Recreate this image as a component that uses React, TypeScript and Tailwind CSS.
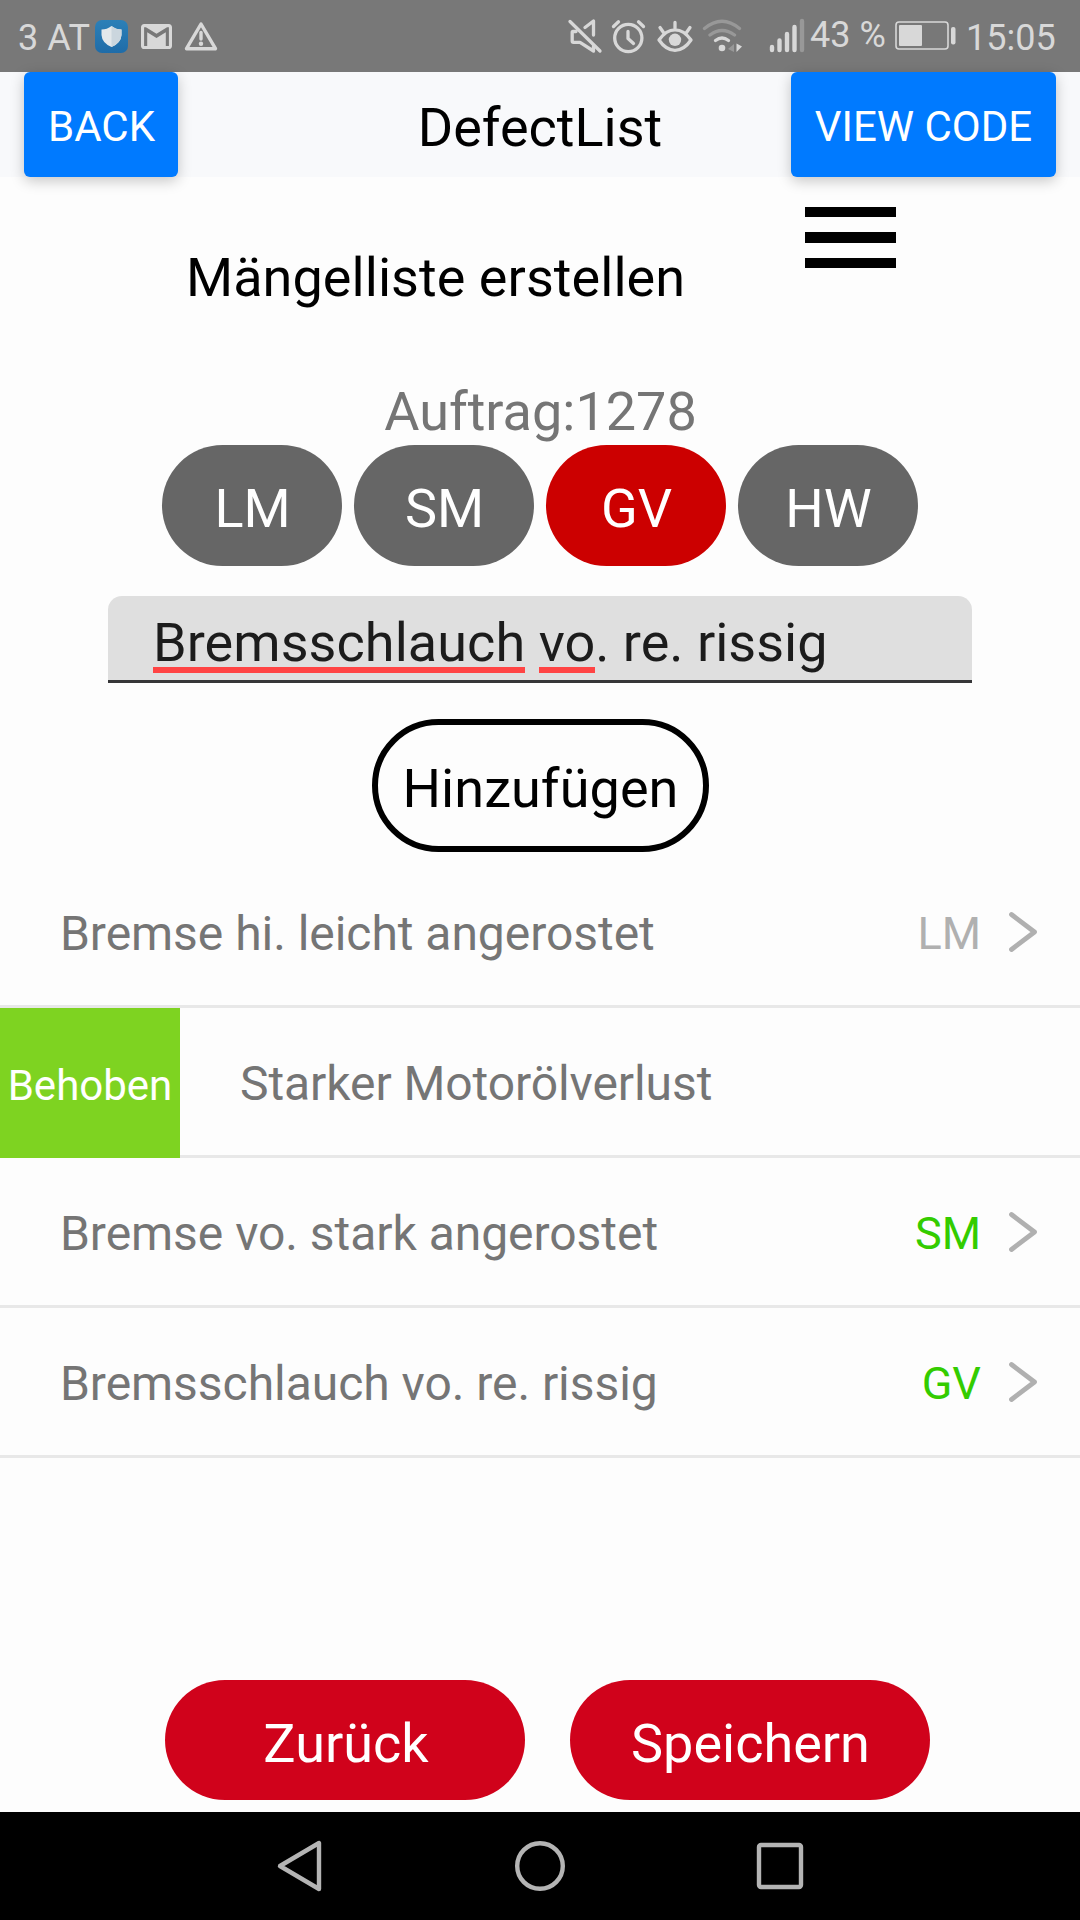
const tabs = [
  { label: "LM", active: false },
  { label: "SM", active: false },
  { label: "GV", active: true },
  { label: "HW", active: false },
];

function StatusBar() {
  return (
    <div className="flex h-[72px] shrink-0 items-center bg-[#787878] text-[36px] leading-[42px] text-[#d8d8d8]">
      <span className="ml-[18px] w-[77px] whitespace-nowrap pt-[3px]">3 AT</span>
      <svg width="33" height="33" viewBox="0 0 33 33" className="shrink-0">
        <defs>
          <linearGradient id="tile" x1="0" y1="0" x2="0" y2="1">
            <stop offset="0" stopColor="#2c80b8" />
            <stop offset="1" stopColor="#1f6ca8" />
          </linearGradient>
        </defs>
        <rect width="33" height="33" rx="7" fill="url(#tile)" />
        <path d="M16.500 6 Q21 9.500 26.500 9.500 V15 Q26 23 16.500 27 Q7 23 6.500 15 V9.500 Q12 9.500 16.500 6 Z" fill="#e3e8eb" />
        <path d="M16.500 6 Q21 9.500 26.500 9.500 V15 Q26 23 16.500 27 Z" fill="#cbd6de" />
      </svg>
      <svg width="31" height="25" viewBox="2 4 20 16" preserveAspectRatio="none" className="ml-[13px] shrink-0">
        <path
          fill="#d8d8d8"
          d="M20 4H4c-1.100 0-2 .9-2 2v12c0 1.100.9 2 2 2h16c1.100 0 2-.9 2-2V6c0-1.100-.9-2-2-2zm0 14h-2V9.250L12 13 6 9.250V18H4V6h1.200l6.800 4.250L18.800 6H20v12z"
        />
      </svg>
      <svg width="34" height="30" viewBox="0 0 34 30" className="-mt-[1px] ml-[12px] shrink-0">
        <path d="M17 3 L31.500 27.700 H2.500 Z" fill="none" stroke="#d8d8d8" strokeWidth="3.400" strokeLinejoin="round" />
        <path d="M17 11.500 V18" stroke="#d8d8d8" strokeWidth="3.400" strokeLinecap="round" />
        <circle cx="17" cy="22.800" r="2.200" fill="#d8d8d8" />
      </svg>
      <svg width="242" height="36" viewBox="568 18 242 36" fill="none" stroke="#d8d8d8" strokeWidth="3.300" strokeLinecap="round" strokeLinejoin="round" className="ml-[349px] shrink-0">
        <path d="M571 21.500 L601 51" />
        <path d="M586 27.500 L594.500 21 V35" />
        <path d="M577 31.500 H574 Q573.200 31.500 573.200 32.500 V41 Q573.200 42.300 574.500 42.300 H581 L594.500 51 V46" />
        <circle cx="629.300" cy="38" r="13.600" />
        <path d="M629 31.500 V38.500 L634.500 43.500" />
        <path d="M614.500 26.500 L619.500 21.800 M644.500 26.500 L639.500 21.800" />
        <path d="M660 40 Q667 29.800 676 29.800 Q685 29.800 692 40 Q685 50.300 676 50.300 Q667 50.300 660 40 Z" />
        <circle cx="676" cy="39.800" r="6.200" fill="#d8d8d8" stroke="none" />
        <path d="M676 22.500 V28 M661 27.500 L664.500 32.500 M691 27.500 L687.500 32.500" />
        <path d="M705.500 28.500 Q723 14 740.500 28.500 M711 35 Q723 26 735.500 35" stroke="#989898" />
        <path d="M716.500 40.500 Q723 35.500 729.500 40.500" />
        <circle cx="723" cy="48" r="3.300" fill="#d8d8d8" stroke="none" />
        <path d="M735 44 V52 L729 49 Z" fill="#989898" stroke="none" />
        <path d="M737.500 43.500 L743 46.500 L737.500 52 Z" fill="#d8d8d8" stroke="none" />
        <path d="M773 47 V50 M780.500 40.500 V50 M788 34 V50 M795.500 27 V50" strokeWidth="4.400" />
        <path d="M803 21 V50" stroke="#989898" strokeWidth="4.400" />
      </svg>
      <span className="-mt-[3px] ml-[1px] w-[85px] whitespace-nowrap">43 %</span>
      <svg width="62" height="29" viewBox="0 0 62 29" className="-mt-[1px] shrink-0">
        <rect x="1" y="1" width="52" height="27" rx="3" fill="none" stroke="#d8d8d8" strokeWidth="1.600" />
        <rect x="4" y="4" width="23" height="21" rx="1" fill="#d8d8d8" />
        <rect x="56" y="6" width="4.500" height="17.500" rx="2" fill="#d8d8d8" />
      </svg>
      <span className="ml-[9px] whitespace-nowrap pt-[3px]">15:05</span>
    </div>
  );
}

function Chevron() {
  return (
    <svg width="30" height="42" viewBox="0 0 30 42" className="mr-[42px] ml-[27px] shrink-0">
      <path d="M3.500 3.500 L26.500 21 L3.500 38.500" fill="none" stroke="#b0b0b0" strokeWidth="4.800" strokeLinecap="round" strokeLinejoin="round" />
    </svg>
  );
}

function Row({ text, tag, tagClass }: { text: string; tag: string; tagClass: string }) {
  return (
    <div className="flex h-[150px] items-center border-b-[3px] border-[#e8e8e8] pl-[60px]">
      <span className="flex-1 pt-[5px] text-[48px] leading-[56px] tracking-[-0.04px] text-[#757575]">{text}</span>
      <span className={"pt-[4px] text-[45px] leading-[54px] " + tagClass}>{tag}</span>
      <Chevron />
    </div>
  );
}

export default function App() {
  return (
    <div className="flex h-[1920px] w-[1080px] flex-col overflow-hidden bg-[#fdfdfd] font-['Roboto',sans-serif]">
      <StatusBar />
      <header className="flex h-[105px] shrink-0 items-stretch justify-between bg-[#f8f9fb] px-[24px]">
        <button className="w-[154px] rounded-[6px] bg-[#007aff] pt-[4px] pl-[1px] text-[42px] leading-[50px] text-white shadow-[0_4px_14px_rgba(0,0,0,0.22)]">BACK</button>
        <h1 className="ml-[111px] flex-1 pt-[24px] text-center text-[54px] leading-[64px] text-black">DefectList</h1>
        <button className="w-[265px] rounded-[6px] bg-[#007aff] pt-[4px] text-[42px] leading-[50px] text-white shadow-[0_4px_14px_rgba(0,0,0,0.22)]">VIEW CODE</button>
      </header>

      <div className="flex h-[192px] shrink-0 items-start">
        <h2 className="mt-[69px] ml-[186px] w-[619px] text-[54px] leading-[64px] tracking-[0.05px] text-black">Mängelliste erstellen</h2>
        <button aria-label="Menu" className="mt-[30px] flex w-[91px] flex-col gap-[15px]">
          <span className="h-[10.4px] bg-black" />
          <span className="h-[10.4px] bg-black" />
          <span className="h-[10.4px] bg-black" />
        </button>
      </div>

      <p className="h-[76px] shrink-0 pt-[11px] pl-[1px] text-center text-[54px] leading-[64px] text-[#757575]">Auftrag:1278</p>

      <div className="flex h-[121px] shrink-0 justify-center gap-[12px]">
        {tabs.map((t) => (
          <button
            key={t.label}
            className={
              "w-[180px] rounded-full pt-[7px] pl-[1px] text-[54px] leading-[64px] text-white " +
              (t.active ? "bg-[#cc0000]" : "bg-[#666666]")
            }
          >
            {t.label}
          </button>
        ))}
      </div>

      <div className="mx-[108px] mt-[30px] h-[87px] shrink-0 rounded-t-[14px] border-b-[3px] border-[#363638] bg-[#dfdfdf] pt-[15px] pl-[45px] text-[54px] leading-[64px] whitespace-nowrap text-[#1c1c1c]">
        <span className="inline-block h-[62px] border-b-[6px] border-[#ff4444] tracking-[0.06px]">Bremsschlauch</span>{" "}
        <span className="inline-block h-[62px] border-b-[6px] border-[#ff4444]">vo</span>. re. rissig
      </div>

      <button className="mx-auto mt-[36px] h-[133px] w-[337px] shrink-0 rounded-full border-[6px] border-black pt-[6px] pl-[1px] text-[54px] leading-[64px] tracking-[0.06px] text-black">
        Hinzufügen
      </button>

      <div className="mt-[6px] shrink-0">
        <Row text="Bremse hi. leicht angerostet" tag="LM" tagClass="text-[#b0b0b0]" />
        <div className="flex h-[150px]">
          <div className="flex w-[180px] items-center justify-center bg-[#7ed321] pt-[5px] text-[42px] text-white">Behoben</div>
          <div className="flex flex-1 items-center border-b-[3px] border-[#e8e8e8] pt-[5px] pl-[60px] text-[48px] tracking-[-0.08px] text-[#757575]">
            Starker Motorölverlust
          </div>
        </div>
        <Row text="Bremse vo. stark angerostet" tag="SM" tagClass="text-[#33cc00]" />
        <Row text="Bremsschlauch vo. re. rissig" tag="GV" tagClass="text-[#33cc00]" />
      </div>

      <div className="mt-auto ml-[165px] flex h-[132px] shrink-0 gap-[45px]">
        <button className="h-[120px] w-[360px] rounded-full bg-[#d0021b] pt-[7px] pl-[2px] text-[54px] leading-[64px] text-white">Zurück</button>
        <button className="h-[120px] w-[360px] rounded-full bg-[#d0021b] pt-[7px] pl-[1px] text-[54px] leading-[64px] text-white">Speichern</button>
      </div>

      <nav className="flex h-[108px] shrink-0 items-center justify-between bg-black px-[276px]">
        <svg width="48" height="54" viewBox="0 0 48 54" fill="none" stroke="#b4b4b4" strokeWidth="4.400" strokeLinejoin="round">
          <path d="M43 4 V50 L4 27 Z" />
        </svg>
        <svg width="54" height="54" viewBox="0 0 54 54" fill="none" stroke="#b4b4b4" strokeWidth="4.400">
          <circle cx="27" cy="27" r="22.800" />
        </svg>
        <svg width="48" height="54" viewBox="0 0 48 54" fill="none" stroke="#b4b4b4" strokeWidth="4.400">
          <rect x="3" y="6" width="42" height="42" rx="2" />
        </svg>
      </nav>
    </div>
  );
}
